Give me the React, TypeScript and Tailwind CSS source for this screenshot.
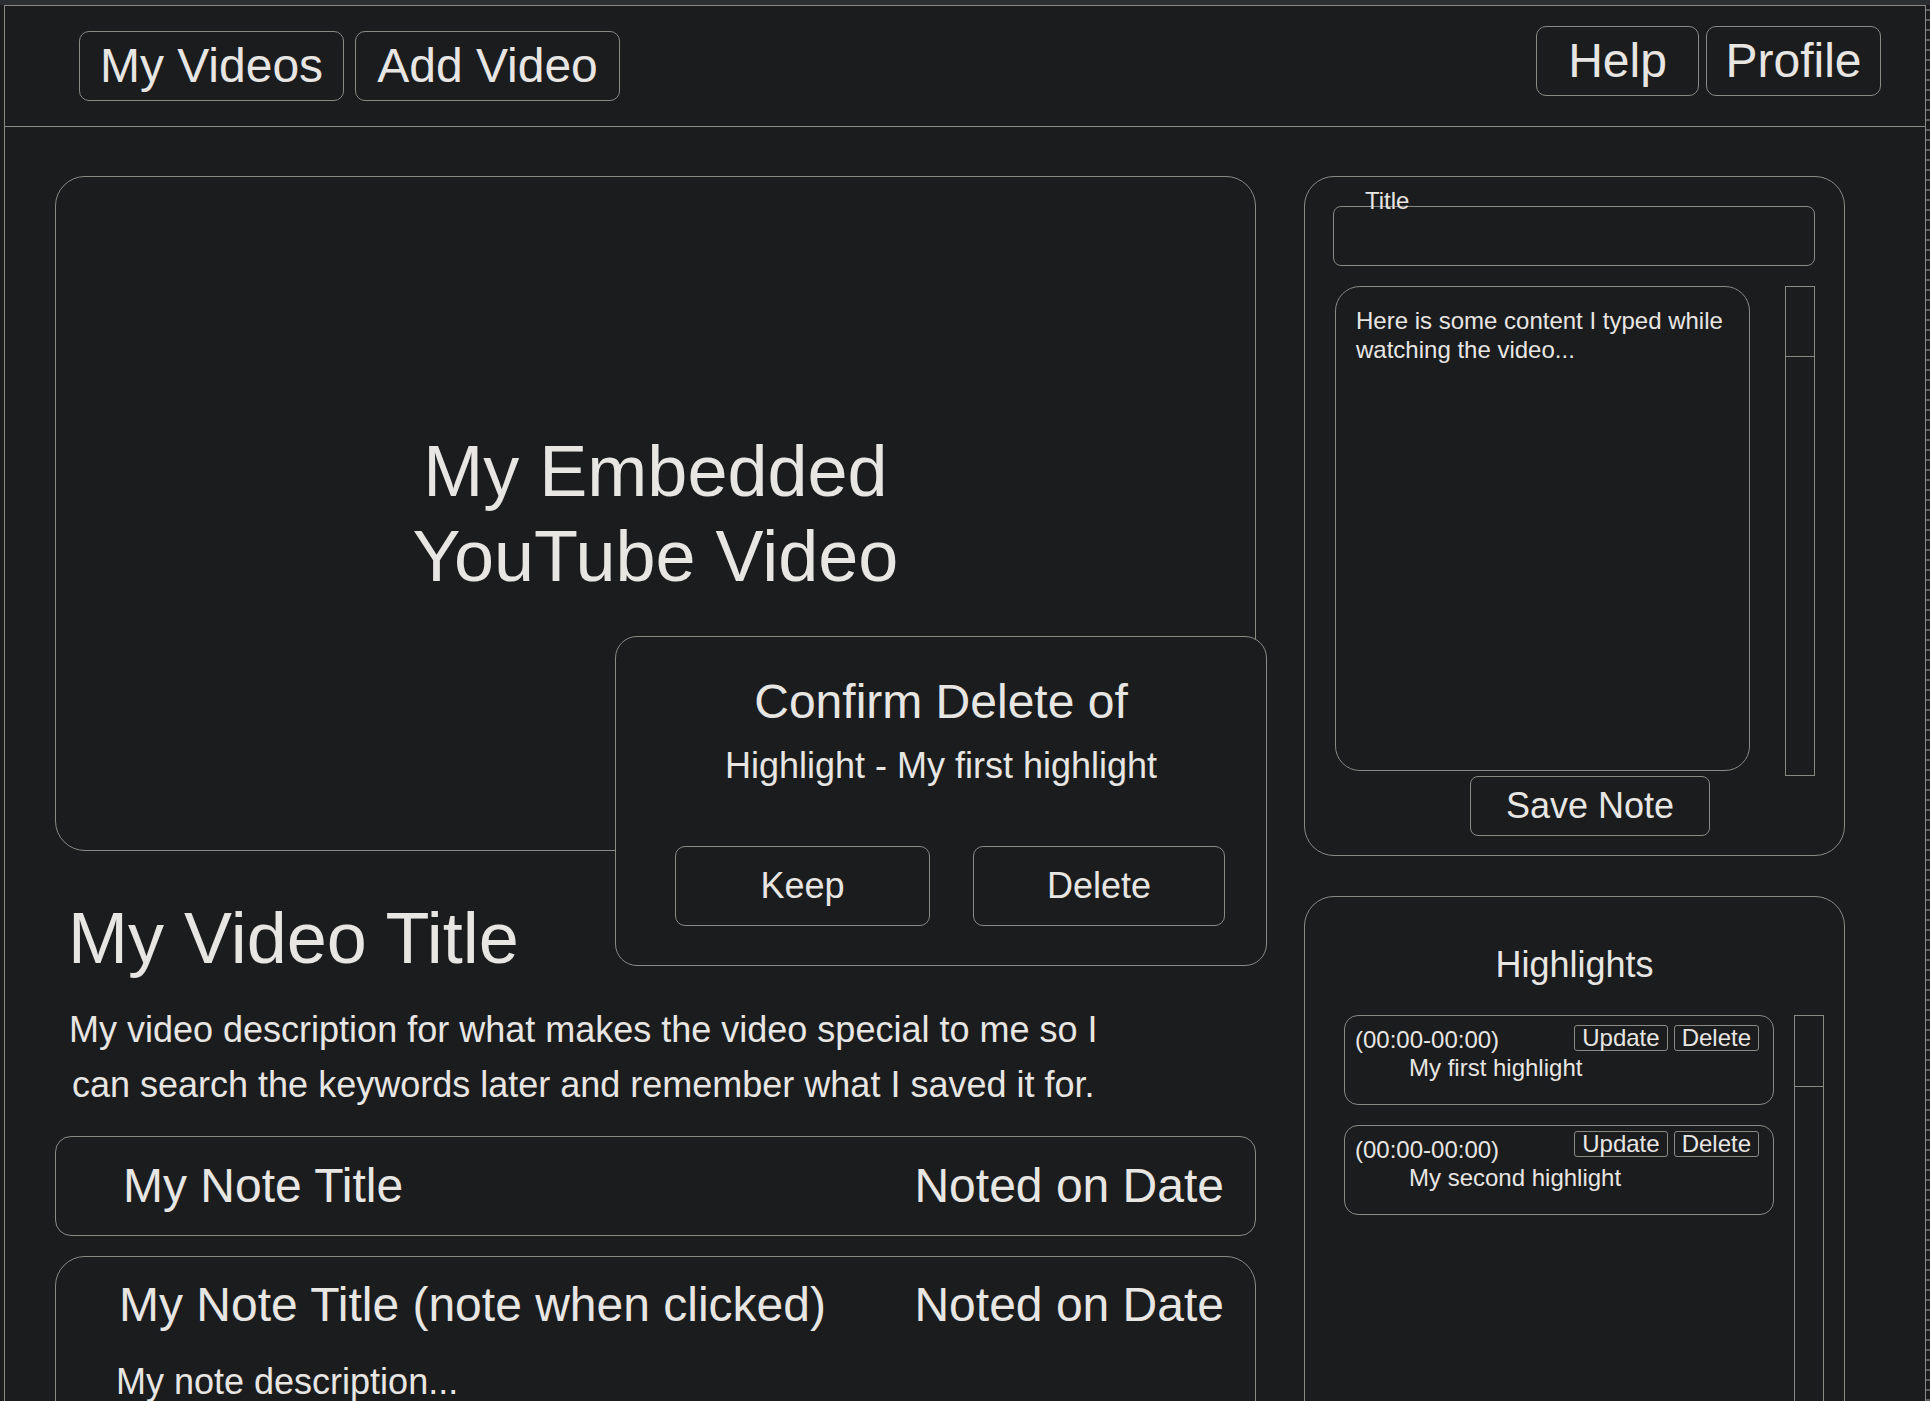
import React from "react";

const line = "border border-[#8a8984]";

function HeaderButton({ label, w, cls }: { label: string; w: string; cls?: string }) {
  return (
    <div className={`${line} ${w} h-[70px] rounded-[10px] flex items-center justify-center ${cls ?? ""}`}>
      <span>{label}</span>
    </div>
  );
}

function HighlightItem({ text, btnTop }: { text: string; btnTop: string }) {
  return (
    <div className={`${line} w-[430px] h-[90px] rounded-[14px] pl-[10px] pr-[14px]`}>
      <div className="flex justify-between items-start">
        <div className="mt-[10px] text-[24px] leading-[28px]">(00:00-00:00)</div>
        <div className={`flex gap-[6px] ${btnTop}`}>
          <div className={`${line} h-[26px] rounded-[3px] px-[7px] text-[24px] leading-[24px]`}>Update</div>
          <div className={`${line} h-[26px] rounded-[3px] px-[7px] text-[24px] leading-[24px]`}>Delete</div>
        </div>
      </div>
      <div className="ml-[54px] text-[24px] leading-[28px]">{text}</div>
    </div>
  );
}

export default function App() {
  return (
    <div className="w-[1930px] h-[1401px] overflow-hidden bg-[#1b1c1e] text-[#e8e6e3] font-['Liberation_Sans',Arial,sans-serif]">
      <div className="h-[5px] bg-[#2b2e32]" />
      <div className="flex h-[1396px]">
        <div className="w-[4px]" />
        <div className="w-[1922px] h-[1430px] border-l border-t border-r border-[#8a8984]">
          {/* Header */}
          <div className="h-[121px] border-b border-[#8a8984] flex justify-between">
            <div className="flex gap-[11px] pl-[74px] pt-[25px] text-[48px]">
              <HeaderButton label="My Videos" w="w-[265px]" />
              <HeaderButton label="Add Video" w="w-[265px]" />
            </div>
            <div className="flex gap-[7px] pr-[44px] pt-[20px] text-[48px]">
              <HeaderButton label="Help" w="w-[163px]" />
              <HeaderButton label="Profile" w="w-[175px]" />
            </div>
          </div>

          {/* Body */}
          <div className="flex pl-[50px] pt-[49px] gap-[48px]">
            {/* Left column */}
            <div className="relative w-[1201px]">
              <div className={`${line} h-[675px] rounded-[30px] flex items-center justify-center text-center text-[72px] leading-[85px]`}>
                <div>
                  My Embedded
                  <br />
                  YouTube Video
                </div>
              </div>

              <div className="mt-[47px] pl-[13px] text-[72px] leading-[80px]">My Video Title</div>

              <div className="mt-[24px] pl-[14px] text-[36px] leading-[55px] whitespace-nowrap">
                <div>My video description for what makes the video special to me so I</div>
                <div className="pl-[3px]">can search the keywords later and remember what I saved it for.</div>
              </div>

              <div className={`${line} mt-[24px] h-[100px] rounded-[16px] flex items-center justify-between pl-[67px] pr-[31px] text-[48px] leading-[56px]`}>
                <span>My Note Title</span>
                <span>Noted on Date</span>
              </div>

              <div className={`${line} mt-[20px] h-[320px] rounded-[30px] pt-[20px] pl-[63px] pr-[31px]`}>
                <div className="flex justify-between text-[48px] leading-[56px]">
                  <span>My Note Title (note when clicked)</span>
                  <span>Noted on Date</span>
                </div>
                <div className="mt-[27px] -ml-[3px] text-[36px] leading-[44px]">My note description...</div>
              </div>

              {/* Confirm dialog overlay */}
              <div className={`${line} absolute left-[560px] top-[460px] w-[652px] h-[330px] rounded-[22px] bg-[#1b1c1e] pt-[37px]`}>
                <div className="text-center text-[48px] leading-[56px]">Confirm Delete of</div>
                <div className="mt-[14px] text-center text-[36px] leading-[44px]">Highlight - My first highlight</div>
                <div className="mt-[58px] pl-[59px] flex gap-[43px] text-[36px]">
                  <div className={`${line} w-[255px] h-[80px] rounded-[10px] flex items-center justify-center`}>Keep</div>
                  <div className={`${line} w-[252px] h-[80px] rounded-[10px] flex items-center justify-center`}>Delete</div>
                </div>
              </div>
            </div>

            {/* Right column */}
            <div className="w-[541px]">
              <div className={`${line} h-[680px] rounded-[30px] pt-[29px] pl-[28px]`}>
                <div className={`${line} relative w-[482px] h-[60px] rounded-[8px]`}>
                  <span className="absolute left-[31px] top-[-18px] text-[24px] leading-[24px]">Title</span>
                </div>
                <div className="mt-[20px] flex items-start">
                  <div className={`${line} ml-[2px] w-[415px] h-[485px] rounded-[25px] pl-[20px] pt-[19px] text-[24px] leading-[29px] whitespace-nowrap`}>
                    Here is some content I typed while
                    <br />
                    watching the video...
                  </div>
                  <div className={`${line} ml-[35px] w-[30px] h-[490px]`}>
                    <div className="h-[70px] border-b border-[#8a8984]" />
                  </div>
                </div>
                <div className={`${line} ml-[137px] w-[240px] h-[60px] rounded-[8px] flex items-center justify-center text-[36px]`}>
                  Save Note
                </div>
              </div>

              <div className={`${line} mt-[40px] h-[600px] rounded-[30px] pt-[46px]`}>
                <div className="text-center text-[36px] leading-[44px]">Highlights</div>
                <div className="mt-[28px] flex items-start pl-[39px]">
                  <div className="flex flex-col gap-[20px]">
                    <HighlightItem text="My first highlight" btnTop="mt-[9px]" />
                    <HighlightItem text="My second highlight" btnTop="mt-[5px]" />
                  </div>
                  <div className={`${line} ml-[20px] w-[30px] h-[600px]`}>
                    <div className="h-[71px] border-b border-[#8a8984]" />
                  </div>
                </div>
              </div>
            </div>
          </div>
        </div>
        {/* ruler */}
        <div className="w-[4px] h-full bg-[repeating-linear-gradient(to_bottom,transparent_0px,transparent_4px,#5e5f60_4px,#5e5f60_6px,transparent_6px,transparent_10px)]" />
      </div>
    </div>
  );
}
